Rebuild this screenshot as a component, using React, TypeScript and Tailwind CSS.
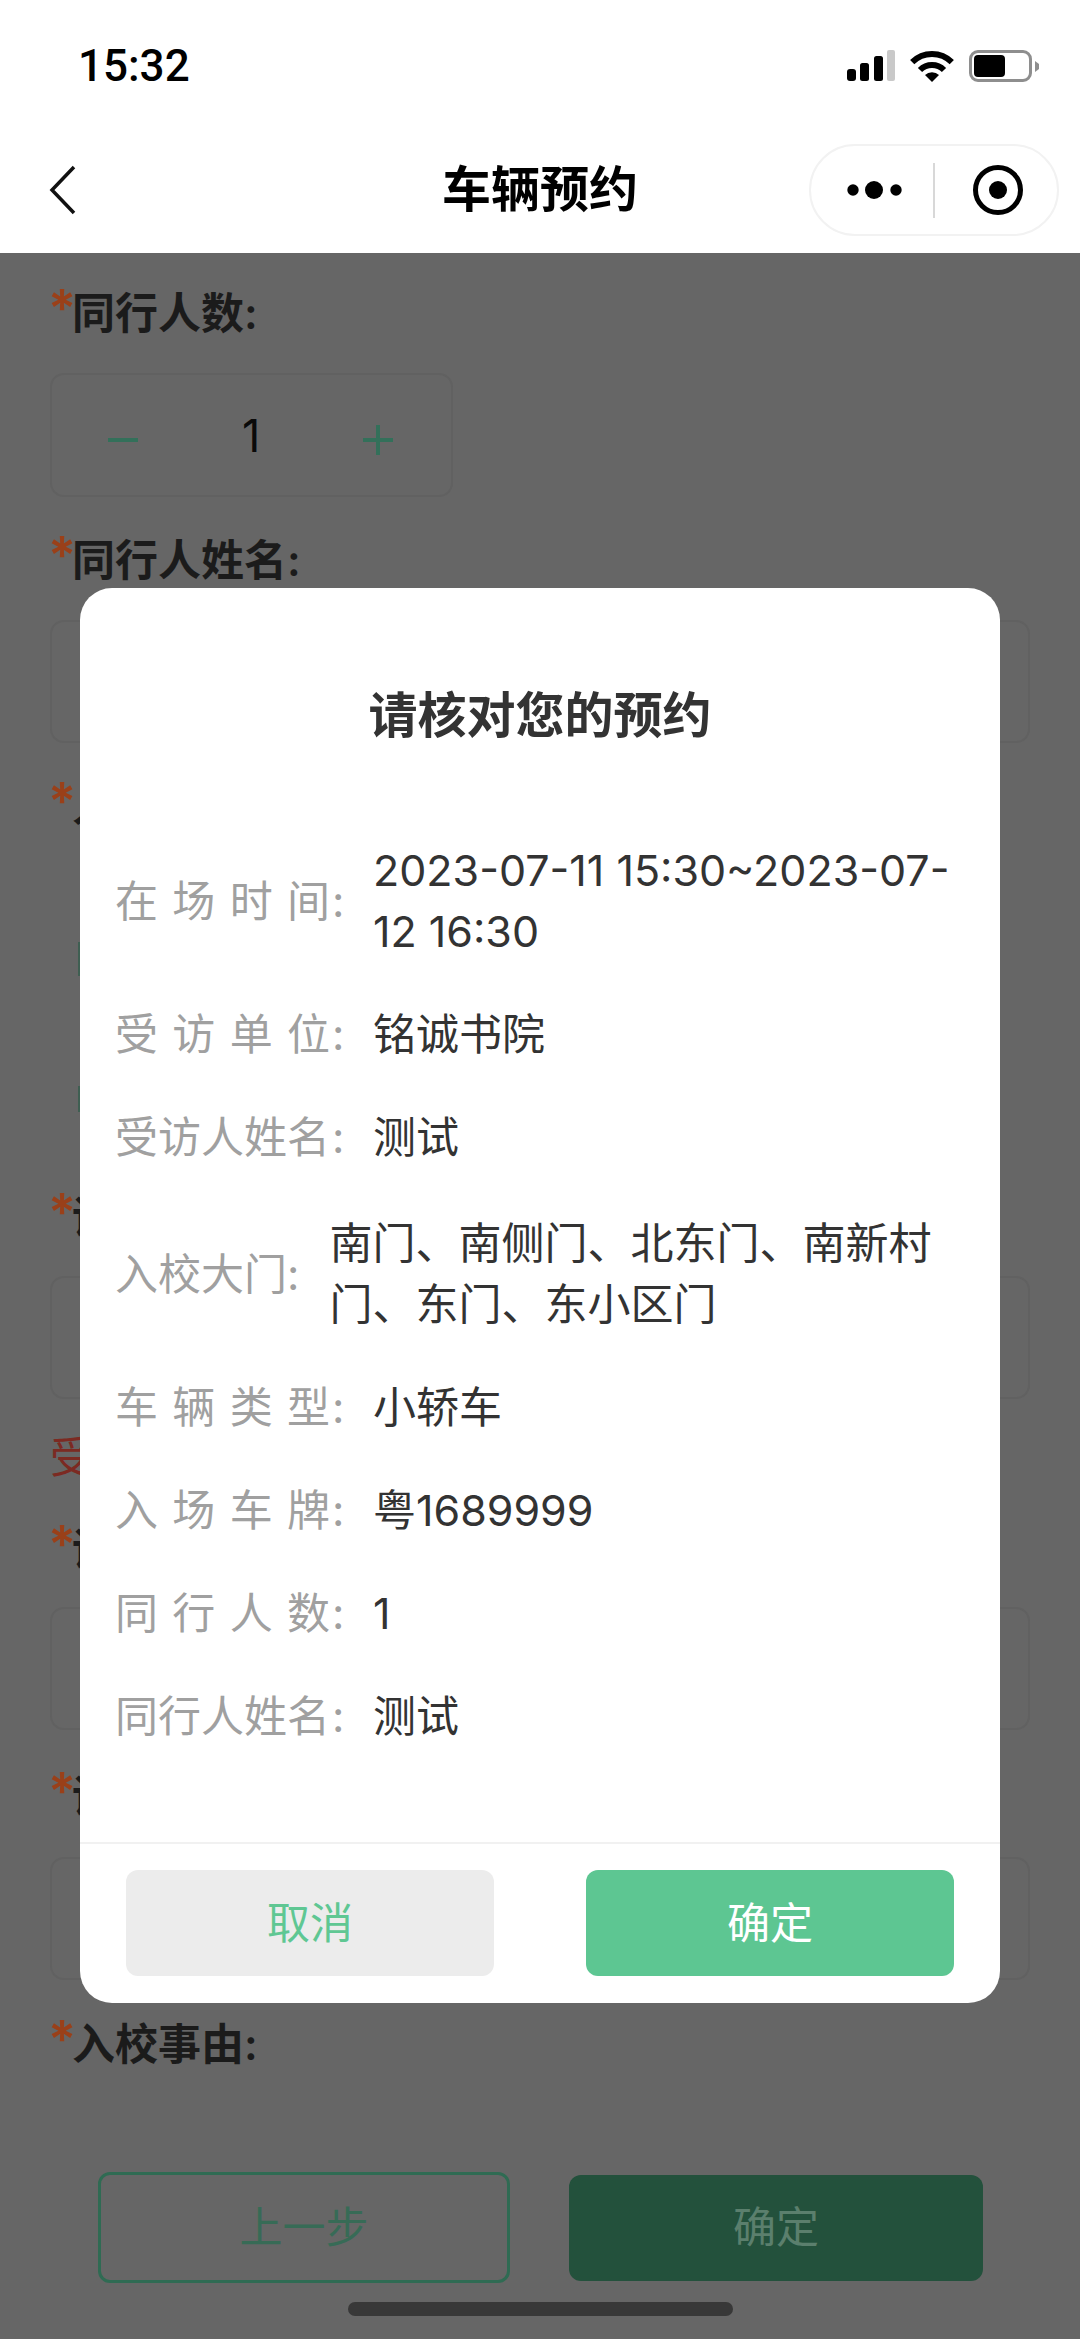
const rows = [
  { label: "受访单位", value: "铭诚书院" },
  { label: "受访人姓名", value: "测试" },
];

const rowsAfterGate = [
  { label: "车辆类型", value: "小轿车" },
  { label: "入场车牌", value: "粤1689999" },
  { label: "同行人数", value: "1" },
  { label: "同行人姓名", value: "测试" },
];

function FieldLabel({ text, className }: { text: string; className: string }) {
  return (
    <div className={`flex h-[60px] items-center text-[43px] font-semibold leading-[60px] text-[#1b1b1b] ${className}`}>
      <span className="-ml-[2px] -mt-2 w-[24px] text-[52px] font-semibold text-[#9a4019]">*</span>
      <span>{text}</span>
    </div>
  );
}

function InputBox({ className }: { className: string }) {
  return <div className={`h-[123px] rounded-[14px] border-2 border-[#616161] ${className}`} />;
}

function ReviewRow({ label, value }: { label: string; value: React.ReactNode }) {
  return (
    <div className="flex items-center">
      <span className="flex w-[258px] shrink-0 text-[#a0a0a0]">
        <span className="block w-[215px] [text-align-last:justify]">{label}</span>
        <span className="ml-[2px]">:</span>
      </span>
      <span className="text-[#333]">{value}</span>
    </div>
  );
}

export default function App() {
  return (
    <div className="relative h-[2339px] w-[1080px] overflow-hidden bg-[#666] [font-family:Inter,'Noto_Sans_CJK_SC',sans-serif]">
      {/* Status bar + nav */}
      <div className="h-[253px] bg-white">
        <div className="flex h-[132px] items-center justify-between pl-[78px] pr-[41px]">
          <span className="text-[44px] font-medium text-black [font-family:Roboto,sans-serif]">15:32</span>
          <div className="flex items-center">
            <svg width="48" height="32" viewBox="0 0 48 32">
              <rect x="0" y="19" width="9" height="12" rx="3" fill="#000" />
              <rect x="13" y="13" width="9" height="18" rx="2.5" fill="#000" />
              <rect x="27" y="6" width="9" height="25" rx="2.5" fill="#000" />
              <rect x="40" y="0" width="8" height="31" rx="2" fill="#c9c9c9" />
            </svg>
            <svg className="ml-[15px]" width="44" height="32" viewBox="0 0 44 32" fill="none" stroke="#000" strokeWidth="6">
              <path d="M2.2 12.2A28 28 0 0 1 41.8 12.2" />
              <path d="M10 20A17 17 0 0 1 34 20" />
              <path d="M22 32L15 25A10 10 0 0 1 29 25Z" fill="#000" stroke="none" />
            </svg>
            <div className="ml-[15px] flex items-center">
              <div className="h-[32px] w-[63px] rounded-[9px] border-[3px] border-[#8e8e8e] p-[2px]">
                <div className="h-full w-[31px] rounded-[4px] bg-black" />
              </div>
              <svg className="ml-[3px]" width="4" height="11" viewBox="0 0 4 11">
                <path d="M0 0L4 3V8L0 11Z" fill="#8e8e8e" />
              </svg>
            </div>
          </div>
        </div>
        <div className="grid h-[116px] grid-cols-[1fr_auto_1fr] items-center px-[21px]">
          <svg className="ml-[28px]" width="28" height="50" viewBox="0 0 28 50" fill="none" stroke="#111" strokeWidth="3.5">
            <path d="M25 2L3 25L25 48" />
          </svg>
          <span className="text-[49px] font-semibold text-black">车辆预约</span>
          <div className="flex h-[92px] w-[250px] items-center justify-self-end rounded-full border-2 border-[#f2f2f2]">
            <svg className="ml-[34px]" width="64" height="20" viewBox="0 0 64 20" fill="#000">
              <circle cx="8" cy="10" r="5.7" />
              <circle cx="29" cy="10" r="9" />
              <circle cx="51" cy="10" r="5.7" />
            </svg>
            <div className="ml-[24px] h-[55px] w-[2px] bg-[#d8d8d8]" />
            <svg className="ml-[37px]" width="52" height="52" viewBox="0 0 52 52" fill="none">
              <circle cx="26" cy="26" r="22.5" stroke="#000" strokeWidth="5" />
              <circle cx="26" cy="26" r="9" fill="#000" />
            </svg>
          </div>
        </div>
      </div>

      {/* Form behind the dialog */}
      <div className="flex flex-col px-[50px] pt-[30px]">
        <FieldLabel text="同行人数:" className="" />
        <div className="mt-[30px] flex h-[124px] w-[403px] items-center rounded-[14px] border-2 border-[#616161]">
          <div className="ml-[56px] mt-[10px] h-[4px] w-[30px] bg-[#33705a]" />
          <span className="ml-[104px] text-[45px] leading-none text-[#0a0a0a]">1</span>
          <svg className="ml-[103px] mt-[10px]" width="30" height="30" viewBox="0 0 30 30" stroke="#33705a" strokeWidth="4">
            <path d="M0 15H30M15 0V30" />
          </svg>
        </div>
        <FieldLabel text="同行人姓名:" className="mt-[33px]" />
        <InputBox className="mt-[30px]" />
        <FieldLabel text="入场时间:" className="mt-[33px]" />
        <div className="ml-[28px] mt-[106px] h-[34px] w-[2px] bg-[#3f5f52]" />
        <div className="ml-[28px] mt-[110px] h-[26px] w-[2px] bg-[#3f5f52]" />
        <FieldLabel text="请选择受访单位:" className="mt-[75px]" />
        <InputBox className="mt-[29px]" />
        <span className="mt-[28px] h-[60px] text-[43px] leading-[60px] text-[#7c2a22]">受访单位不能为空</span>
        <FieldLabel text="请输入受访人姓名:" className="mt-[32px]" />
        <InputBox className="mt-[28px]" />
        <FieldLabel text="请选择入校大门:" className="mt-[36px]" />
        <InputBox className="mt-[31px]" />
        <FieldLabel text="入校事由:" className="mt-[34px]" />

        <div className="ml-[48px] mt-[98px] flex items-center">
          <div className="flex h-[111px] w-[412px] items-center justify-center rounded-[12px] border-[3px] border-[#2f6b53] text-[43px] text-[#376b56]">
            上一步
          </div>
          <div className="ml-[59px] flex h-[106px] w-[414px] items-center justify-center rounded-[12px] bg-[#23513c] text-[43px] text-[#5b7f6d]">
            确定
          </div>
        </div>
        <div className="mx-auto mt-[19px] h-[14px] w-[385px] rounded-full bg-[#383838]" />
      </div>

      {/* Dialog */}
      <div className="absolute left-[80px] top-[588px] w-[920px] overflow-hidden rounded-[32px] bg-white">
        <div className="pt-[94px] text-center text-[49px] font-semibold leading-[68px] text-[#333]">请核对您的预约</div>
        <div className="flex flex-col gap-[42px] pb-[95px] pl-[35px] pr-[35px] pt-[90px] text-[43px] leading-[61px]">
          <ReviewRow
            label="在场时间"
            value={
              <>
                2023-07-11 15:30~2023-07-
                <br />
                12 16:30
              </>
            }
          />
          {rows.map((r) => (
            <ReviewRow key={r.label} label={r.label} value={r.value} />
          ))}
          <div className="mt-[3px] flex items-center">
            <span className="shrink-0 text-[#a0a0a0]">入校大门:</span>
            <span className="ml-[30px] text-[#333]">南门、南侧门、北东门、南新村门、东门、东小区门</span>
          </div>
          {rowsAfterGate.map((r) => (
            <ReviewRow key={r.label} label={r.label} value={r.value} />
          ))}
        </div>
        <div className="flex justify-between border-t-2 border-[#f1f1f1] px-[46px] pb-[27px] pt-[26px] text-[43px]">
          <div className="flex h-[106px] w-[368px] items-center justify-center rounded-[12px] bg-[#ececec] text-[#5fc793]">取消</div>
          <div className="flex h-[106px] w-[368px] items-center justify-center rounded-[12px] bg-[#5dc692] text-white">确定</div>
        </div>
      </div>
    </div>
  );
}
